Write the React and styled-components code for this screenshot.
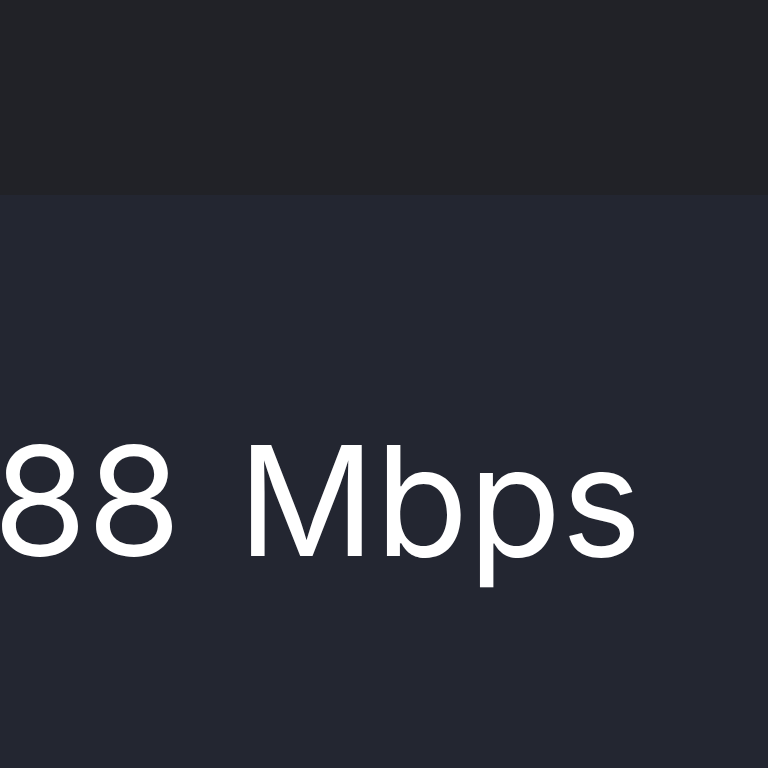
import React from 'react'
import styled, { createGlobalStyle } from 'styled-components'

const GlobalStyle = createGlobalStyle`
  html, body {
    margin: 0;
    padding: 0;
    background: #232631;
  }
  #root {
    width: 768px;
    height: 768px;
  }
`

const Screen = styled.div`
  width: 768px;
  height: 768px;
  display: flex;
  flex-direction: column;
  overflow: hidden;
  font-family: Inter, "Noto Sans", sans-serif;
`

const TopBar = styled.div`
  height: 195px;
  flex-shrink: 0;
  background: #212227;
`

const Panel = styled.div`
  flex: 1;
  background: #232631;
  padding-top: 230px;
  overflow: hidden;
`

const Speed = styled.div`
  margin-left: ${(p) => p.$offset}px;
  font-size: 152px;
  line-height: 1;
  font-weight: 400;
  color: #ffffff;
  white-space: nowrap;
  word-spacing: 14px;
`

const App = () => (
  <>
    <GlobalStyle />
    <Screen>
      <TopBar />
      <Panel>
        <Speed $offset={-7}>88 Mbps</Speed>
      </Panel>
    </Screen>
  </>
)

export default App
